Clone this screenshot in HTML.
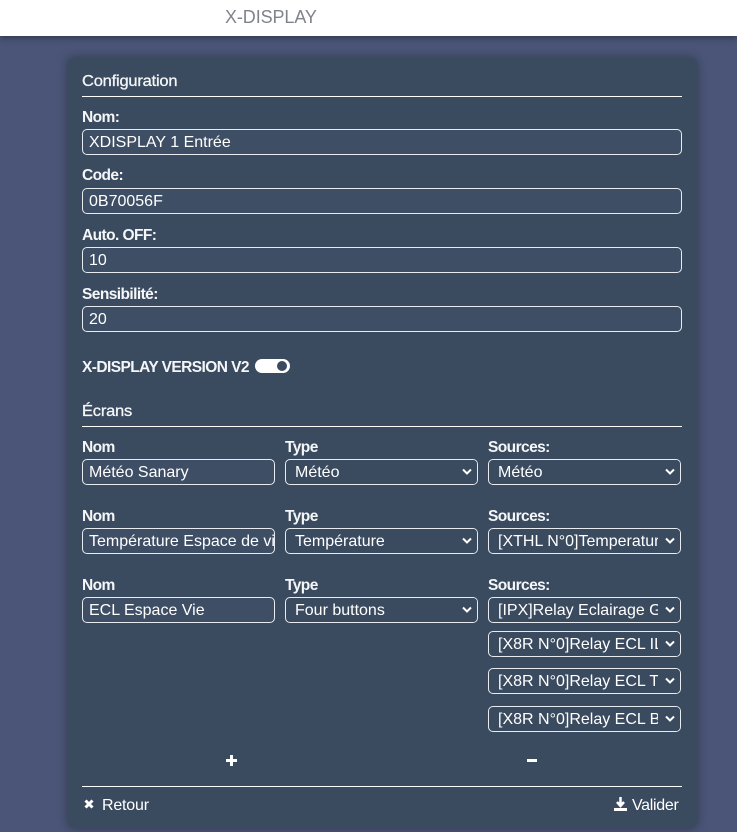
<!DOCTYPE html>
<html><head><meta charset="utf-8"><style>
*{box-sizing:border-box;margin:0;padding:0}
body{width:737px;height:832px;overflow:hidden;background:#4a5577;font-family:"Liberation Sans",sans-serif;color:#fff;position:relative}
.hdr{position:absolute;left:0;top:0;width:737px;height:36px;background:#fff;box-shadow:0 2px 6px rgba(0,0,0,.35)}
.hdr span{position:absolute;left:225px;top:7px;font-size:18px;color:#80848a;letter-spacing:-0.1px}
.card{position:absolute;left:68px;top:58px;width:629px;height:770px;background:#3a4a5f;border-radius:6px;box-shadow:0 0 10px rgba(0,0,0,.35)}
.a{position:absolute;white-space:nowrap}
.lbl{font-size:16px;letter-spacing:-0.6px;font-weight:bold;transform:scaleX(.97);transform-origin:left;color:#f4f6f8}
.ttl{font-size:16px;letter-spacing:-0.2px;transform:scaleX(1.03);transform-origin:left;color:#f4f6f8;-webkit-text-stroke:0.3px #f4f6f8}
.rule{position:absolute;height:1px;background:#fff;left:82px;width:600px}
.in{position:absolute;height:26px;border:1px solid #e8ebef;border-radius:5px;background:#3e4e64;font-size:16px;padding:4px 0 0 6px;white-space:nowrap;overflow:hidden}
.sel{background:#3a4a5f;padding-left:9px}
.sel svg{position:absolute;right:0;top:0;width:22px;height:24px;background:#3a4a5f;padding:8px 5px 8px 7px}
</style></head><body>
<div class="hdr"><span>X-DISPLAY</span></div>
<div class="card"></div>
<div class="a ttl" style="left:82px;top:73px">Configuration</div>
<div class="rule" style="top:96px"></div>
<div class="a lbl" style="left:82px;top:109px">Nom:</div>
<div class="in" style="left:82px;top:129px;width:600px">XDISPLAY 1 Entrée</div>
<div class="a lbl" style="left:82px;top:167px">Code:</div>
<div class="in" style="left:82px;top:188px;width:600px">0B70056F</div>
<div class="a lbl" style="left:82px;top:227px">Auto. OFF:</div>
<div class="in" style="left:82px;top:247px;width:600px">10</div>
<div class="a lbl" style="left:82px;top:286px">Sensibilité:</div>
<div class="in" style="left:82px;top:306px;width:600px">20</div>
<div class="a lbl" style="left:82px;top:359px">X-DISPLAY VERSION V2</div>
<div class="a" style="left:255px;top:359px;width:35px;height:14px;border-radius:7px;background:#fff"><div style="position:absolute;right:3px;top:2px;width:10px;height:10px;border-radius:50%;background:#3a4a5f"></div></div>
<div class="a ttl" style="left:82px;top:403px">Écrans</div>
<div class="rule" style="top:426px"></div>

<div class="a lbl" style="left:82px;top:439px">Nom</div>
<div class="a lbl" style="left:285px;top:439px">Type</div>
<div class="a lbl" style="left:488px;top:439px">Sources:</div>
<div class="in" style="left:82px;top:459px;width:193px">Météo Sanary</div>
<div class="in sel" style="left:285px;top:459px;width:193px">Météo<svg viewBox="0 0 10 7"><path d="M1 1l4 4 4-4" stroke="#fff" stroke-width="2" fill="none"/></svg></div>
<div class="in sel" style="left:488px;top:459px;width:193px">Météo<svg viewBox="0 0 10 7"><path d="M1 1l4 4 4-4" stroke="#fff" stroke-width="2" fill="none"/></svg></div>

<div class="a lbl" style="left:82px;top:508px">Nom</div>
<div class="a lbl" style="left:285px;top:508px">Type</div>
<div class="a lbl" style="left:488px;top:508px">Sources:</div>
<div class="in" style="left:82px;top:528px;width:193px">Température Espace de vie</div>
<div class="in sel" style="left:285px;top:528px;width:193px">Température<svg viewBox="0 0 10 7"><path d="M1 1l4 4 4-4" stroke="#fff" stroke-width="2" fill="none"/></svg></div>
<div class="in sel" style="left:488px;top:528px;width:193px">[XTHL N°0]Temperature<svg viewBox="0 0 10 7"><path d="M1 1l4 4 4-4" stroke="#fff" stroke-width="2" fill="none"/></svg></div>

<div class="a lbl" style="left:82px;top:577px">Nom</div>
<div class="a lbl" style="left:285px;top:577px">Type</div>
<div class="a lbl" style="left:488px;top:577px">Sources:</div>
<div class="in" style="left:82px;top:597px;width:193px">ECL Espace Vie</div>
<div class="in sel" style="left:285px;top:597px;width:193px">Four buttons<svg viewBox="0 0 10 7"><path d="M1 1l4 4 4-4" stroke="#fff" stroke-width="2" fill="none"/></svg></div>
<div class="in sel" style="left:488px;top:597px;width:193px">[IPX]Relay Eclairage G<svg viewBox="0 0 10 7"><path d="M1 1l4 4 4-4" stroke="#fff" stroke-width="2" fill="none"/></svg></div>
<div class="in sel" style="left:488px;top:631px;width:193px">[X8R N°0]Relay ECL IL<svg viewBox="0 0 10 7"><path d="M1 1l4 4 4-4" stroke="#fff" stroke-width="2" fill="none"/></svg></div>
<div class="in sel" style="left:488px;top:668px;width:193px">[X8R N°0]Relay ECL TA<svg viewBox="0 0 10 7"><path d="M1 1l4 4 4-4" stroke="#fff" stroke-width="2" fill="none"/></svg></div>
<div class="in sel" style="left:488px;top:706px;width:193px">[X8R N°0]Relay ECL B<svg viewBox="0 0 10 7"><path d="M1 1l4 4 4-4" stroke="#fff" stroke-width="2" fill="none"/></svg></div>

<svg class="a" style="left:226px;top:755px" width="11" height="11" viewBox="0 0 11 11"><path d="M5.5 0v11M0 5.5h11" stroke="#fff" stroke-width="3"/></svg>
<div class="a" style="left:527px;top:759px;width:10px;height:3px;background:#fff"></div>
<div class="rule" style="top:786px"></div>
<svg class="a" style="left:84px;top:799px" width="10" height="10" viewBox="0 0 10 10"><path d="M1.5 1.5l7 7M8.5 1.5l-7 7" stroke="#fff" stroke-width="3"/></svg>
<div class="a" style="left:102px;top:797px;font-size:16px;letter-spacing:-0.2px">Retour</div>
<svg class="a" style="left:614px;top:797px" width="13" height="14" viewBox="0 0 13 14"><path d="M6.5 0v8M3 5l3.5 4 3.5-4" stroke="#fff" stroke-width="2.5" fill="none"/><rect x="0" y="11" width="13" height="3" fill="#fff"/></svg>
<div class="a" style="left:632px;top:797px;font-size:16px;letter-spacing:-0.3px">Valider</div>
</body></html>
